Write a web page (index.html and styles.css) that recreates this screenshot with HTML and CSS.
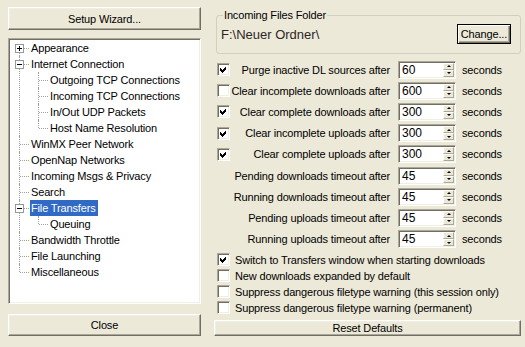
FILE: index.html
```html
<!DOCTYPE html>
<html lang="en">

<head>
    <meta charset="UTF-8">
    <title>Options - File Transfers</title>
    <link rel="stylesheet" href="styles.css">
</head>

<body>

    <div class="dialog">
        <div class="sidebar">
            <button class="btn wizard">Setup Wizard...</button>

            <div class="tree">
                <ul class="nodes">
                    <li><i class="toggle plus"></i><span>Appearance</span></li>
                    <li><i class="toggle"></i><span>Internet Connection</span>
                        <ul>
                            <li><span>Outgoing TCP Connections</span></li>
                            <li><span>Incoming TCP Connections</span></li>
                            <li><span>In/Out UDP Packets</span></li>
                            <li><span>Host Name Resolution</span></li>
                        </ul>
                    </li>
                    <li><span>WinMX Peer Network</span></li>
                    <li><span>OpenNap Networks</span></li>
                    <li><span>Incoming Msgs &amp; Privacy</span></li>
                    <li><span>Search</span></li>
                    <li><i class="toggle"></i><span class="selected">File Transfers</span>
                        <ul>
                            <li><span>Queuing</span></li>
                        </ul>
                    </li>
                    <li><span>Bandwidth Throttle</span></li>
                    <li><span>File Launching</span></li>
                    <li><span>Miscellaneous</span></li>
                </ul>
            </div>

            <button class="btn close">Close</button>
        </div>

        <div class="main">
            <div class="group">
                <span class="group-title">Incoming Files Folder</span>
                <span class="path">F:\Neuer Ordner\</span>
                <button class="btn default">Change...</button>
            </div>

            <div class="timers">
                <span class="check on"><svg viewBox="1 1 11 11"><path d="M3 5L5 7L9 3L9 6L5 10L3 8Z"/></svg></span>
                <span class="label">Purge inactive DL sources after</span>
                <span class="spin"><span class="val">60</span><span class="arrows"><i class="up"></i><i class="down"></i></span></span>
                <span class="unit">seconds</span>

                <span class="check"></span>
                <span class="label">Clear incomplete downloads after</span>
                <span class="spin"><span class="val">600</span><span class="arrows"><i class="up"></i><i class="down"></i></span></span>
                <span class="unit">seconds</span>

                <span class="check on"><svg viewBox="1 1 11 11"><path d="M3 5L5 7L9 3L9 6L5 10L3 8Z"/></svg></span>
                <span class="label">Clear complete downloads after</span>
                <span class="spin"><span class="val">300</span><span class="arrows"><i class="up"></i><i class="down"></i></span></span>
                <span class="unit">seconds</span>

                <span class="check on"><svg viewBox="1 1 11 11"><path d="M3 5L5 7L9 3L9 6L5 10L3 8Z"/></svg></span>
                <span class="label">Clear incomplete uploads after</span>
                <span class="spin"><span class="val">300</span><span class="arrows"><i class="up"></i><i class="down"></i></span></span>
                <span class="unit">seconds</span>

                <span class="check on"><svg viewBox="1 1 11 11"><path d="M3 5L5 7L9 3L9 6L5 10L3 8Z"/></svg></span>
                <span class="label">Clear complete uploads after</span>
                <span class="spin"><span class="val">300</span><span class="arrows"><i class="up"></i><i class="down"></i></span></span>
                <span class="unit">seconds</span>

                <span></span>
                <span class="label">Pending downloads timeout after</span>
                <span class="spin"><span class="val">45</span><span class="arrows"><i class="up"></i><i class="down"></i></span></span>
                <span class="unit">seconds</span>

                <span></span>
                <span class="label">Running downloads timeout after</span>
                <span class="spin"><span class="val">45</span><span class="arrows"><i class="up"></i><i class="down"></i></span></span>
                <span class="unit">seconds</span>

                <span></span>
                <span class="label">Pending uploads timeout after</span>
                <span class="spin"><span class="val">45</span><span class="arrows"><i class="up"></i><i class="down"></i></span></span>
                <span class="unit">seconds</span>

                <span></span>
                <span class="label">Running uploads timeout after</span>
                <span class="spin"><span class="val">45</span><span class="arrows"><i class="up"></i><i class="down"></i></span></span>
                <span class="unit">seconds</span>
            </div>

            <div class="options">
                <div class="opt"><span class="check on"><svg viewBox="1 1 11 11"><path d="M3 5L5 7L9 3L9 6L5 10L3 8Z"/></svg></span>Switch to Transfers window when starting downloads</div>
                <div class="opt"><span class="check"></span>New downloads expanded by default</div>
                <div class="opt"><span class="check"></span>Suppress dangerous filetype warning (this session only)</div>
                <div class="opt"><span class="check"></span>Suppress dangerous filetype warning (permanent)</div>
            </div>

            <button class="btn reset">Reset Defaults</button>
        </div>
    </div>

</body>

</html>
```

FILE: styles.css
```css
body {
    margin: 0;
    background: #ece9d8;
    font-family: "Liberation Sans", Arial, sans-serif;
    font-size: 11px;
    letter-spacing: -0.15px;
    color: #000;
}

.dialog {
    display: flex;
    gap: 13px;
    width: 525px;
    height: 347px;
    box-sizing: border-box;
    padding: 7px 4px 11px 8px;
}

/* buttons */
.btn {
    font: inherit;
    letter-spacing: inherit;
    color: #000;
    background: #ece9d8;
    border: 1px solid;
    border-color: #fff #716f64 #716f64 #fff;
    box-shadow: inset -1px -1px #aca899, inset 1px 1px #f1efe2;
    padding: 0;
    cursor: pointer;
}

.btn.default {
    border: 1px solid #000;
    box-shadow: inset 1px 1px #fff, inset -1px -1px #716f64, inset -2px -2px #aca899;
    width: 54px;
    height: 20px;
}

.sidebar {
    width: 193px;
    display: flex;
    flex-direction: column;
}

.wizard {
    height: 23px;
}

.close {
    margin-top: 10px;
    height: 22px;
}

/* tree */
.tree {
    margin-top: 8px;
    height: 266px;
    box-sizing: border-box;
    background: #fff;
    border: 1px solid;
    border-color: #aca899 #fff #fff #aca899;
    box-shadow: inset 1px 1px #716f64, inset -1px -1px #f1efe2;
    padding: 1px;
}

.nodes,
.nodes ul {
    list-style: none;
    margin: 0;
    padding: 0;
}

.nodes ul {
    margin-left: -1px;
}

.nodes li {
    position: relative;
    padding-left: 20px;
    line-height: 16px;
    white-space: nowrap;
}

.nodes li::before {
    content: "";
    position: absolute;
    left: 9px;
    top: 0;
    bottom: 0;
    border-left: 1px dotted #a0a0a0;
}

.nodes > li:first-child::before {
    top: 8px;
}

.nodes li:last-child::before {
    bottom: auto;
    height: 8px;
}

.nodes li::after {
    content: "";
    position: absolute;
    left: 10px;
    top: 8px;
    width: 9px;
    border-top: 1px dotted #a0a0a0;
}

.nodes span {
    display: inline-block;
    padding: 0 2px 0 1px;
}

.nodes span.selected {
    background: #316ac5;
    color: #fff;
}

.toggle {
    position: absolute;
    z-index: 1;
    left: 5px;
    top: 4px;
    width: 9px;
    height: 9px;
    box-sizing: border-box;
    border: 1px solid #919b9c;
    background: #fff;
}

.toggle::before {
    content: "";
    position: absolute;
    left: 1px;
    top: 3px;
    width: 5px;
    height: 1px;
    background: #000;
}

.toggle.plus::after {
    content: "";
    position: absolute;
    left: 3px;
    top: 1px;
    width: 1px;
    height: 5px;
    background: #000;
}

/* right side */
.main {
    width: 307px;
    display: flex;
    flex-direction: column;
}

.group {
    position: relative;
    margin: 8px 0 0 2px;
    border: 1px solid #d0d0bf;
    border-radius: 3px;
    padding: 8px 9px 9px 4px;
    display: flex;
    align-items: center;
    justify-content: space-between;
}

.group-title {
    position: absolute;
    top: -8px;
    left: 6px;
    padding: 0 1px;
    line-height: 14px;
    background: #ece9d8;
}

.path {
    font-size: 13px;
    letter-spacing: 0;
    color: #2e2626;
}

.timers {
    display: grid;
    grid-template-columns: 13px 168px 58px auto;
    grid-auto-rows: 21.2px;
    align-items: center;
    margin: 5px 0 0 3px;
}

.label {
    justify-self: end;
    white-space: nowrap;
    padding-right: 8px;
}

.unit {
    padding-left: 6px;
}

.check {
    display: inline-block;
    width: 13px;
    height: 13px;
    box-sizing: border-box;
    border: 1px solid;
    border-color: #aca899 #fff #fff #aca899;
    box-shadow: inset 1px 1px #716f64, inset -1px -1px #f1efe2;
    background: #fff;
}

.check svg {
    display: block;
    width: 11px;
    height: 11px;
    shape-rendering: crispEdges;
}

.spin {
    display: flex;
    height: 18px;
    box-sizing: border-box;
    border: 1px solid;
    border-color: #aca899 #fff #fff #aca899;
    box-shadow: inset 1px 1px #716f64, inset -1px -1px #f1efe2;
    background: #fff;
    padding: 1px;
}

.val {
    flex: 1;
    padding-left: 2px;
    line-height: 14px;
    font-size: 12px;
    letter-spacing: 0;
}

.arrows {
    width: 11px;
    display: flex;
    flex-direction: column;
}

.arrows i {
    flex: 1;
    display: flex;
    align-items: center;
    justify-content: center;
    background: #ece9d8;
    border: 1px solid;
    border-color: #fff #aca899 #aca899 #fff;
}

.arrows i::after {
    content: "";
    border-left: 2px solid transparent;
    border-right: 2px solid transparent;
}

.arrows .up::after {
    border-bottom: 2px solid #000;
}

.arrows .down::after {
    border-top: 2px solid #000;
}

.options {
    margin: 2px 0 0 3px;
}

.opt {
    display: flex;
    align-items: center;
    gap: 5px;
    height: 16px;
    white-space: nowrap;
}

.reset {
    margin-top: 4px;
    height: 18px;
}
```
